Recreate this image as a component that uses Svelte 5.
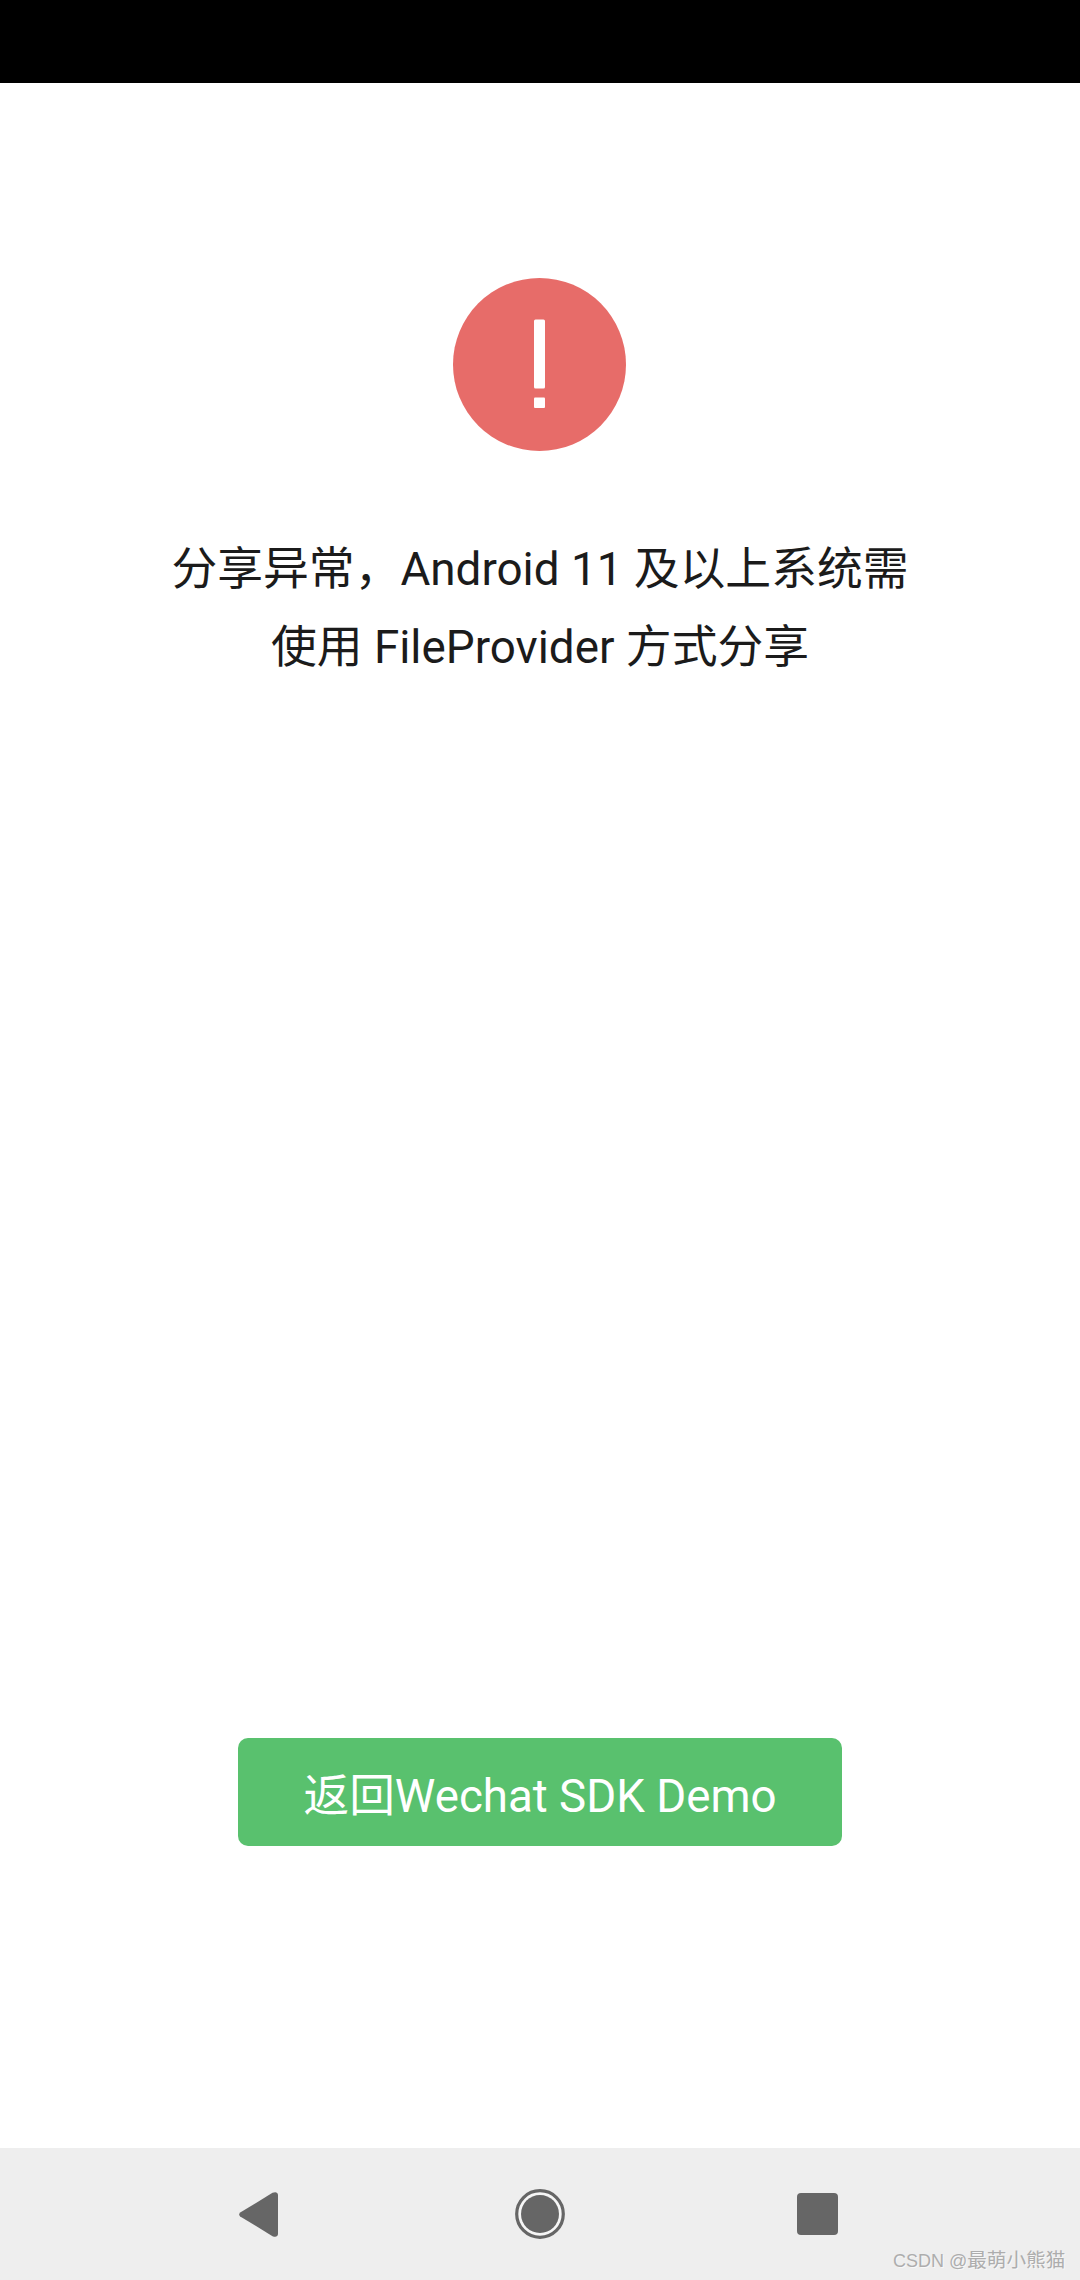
<script lang="ts">
    let message = ['分享异常，Android 11 及以上系统需', '使用 FileProvider 方式分享'];
</script>

<div class="page">
    <div class="status-bar"></div>

    <main>
        <div class="icon">
            <svg width="173" height="173" viewBox="0 0 173 173">
                <circle cx="86.5" cy="86.5" r="86.5" fill="#e76c69" />
                <rect x="81" y="41.5" width="11" height="69" rx="1.5" fill="#fff" />
                <rect x="81" y="119.5" width="11" height="10.5" rx="1" fill="#fff" />
            </svg>
        </div>

        <div class="message">
            {#each message as line}
                <p>{line}</p>
            {/each}
        </div>

        <button>返回Wechat SDK Demo</button>
    </main>

    <nav>
        <svg class="back" width="39" height="45" viewBox="0 0 39 45">
            <path d="M1.2 20.6 L33.5 0.8 Q38.5 -1 39 3 L39 42 Q38.5 46 33.5 44.2 L1.2 24.4 Q-0.8 22.5 1.2 20.6 Z" fill="#666" />
        </svg>
        <svg class="home" width="50" height="50" viewBox="0 0 50 50">
            <circle cx="25" cy="25" r="23.3" fill="#f6f6f6" stroke="#666" stroke-width="3.2" />
            <circle cx="25" cy="25" r="19" fill="#666" />
        </svg>
        <svg class="recent" width="41" height="42" viewBox="0 0 41 42">
            <rect width="41" height="42" rx="4" fill="#666" />
        </svg>
    </nav>

    <span class="watermark"><span class="latin">CSDN @</span>最萌小熊猫</span>
</div>

<style>
    :global(body) {
        margin: 0;
        background: #fff;
    }

    .page {
        position: relative;
        display: flex;
        flex-direction: column;
        width: 1080px;
        height: 2280px;
        overflow: hidden;
        font-family: Roboto, "Noto Sans CJK SC", sans-serif;
    }

    .status-bar {
        height: 83px;
        background: #000;
    }

    main {
        flex: 1;
        display: flex;
        flex-direction: column;
        align-items: center;
        padding-top: 195px;
    }

    .icon {
        height: 173px;
        margin-left: -1px;
    }

    svg {
        display: block;
    }

    .message {
        margin-top: 80px;
        color: #1b1b1b;
        font-size: 45.8px;
        line-height: 78px;
        text-align: center;
    }

    .message p {
        margin: 0;
        white-space: nowrap;
    }

    button {
        margin-top: 1051px;
        width: 604px;
        height: 108px;
        border: 0;
        border-radius: 10px;
        background: #59c16e;
        color: #fff;
        font-family: inherit;
        font-size: 45.7px;
        padding: 0;
    }

    nav {
        position: relative;
        height: 132px;
        background: #eee;
    }

    nav svg {
        position: absolute;
    }

    .back {
        left: 239px;
        top: 44px;
    }

    .home {
        left: 515px;
        top: 41px;
    }

    .recent {
        left: 797px;
        top: 45px;
    }

    .watermark {
        position: absolute;
        left: 893px;
        top: 2248px;
        color: #adadad;
        font-family: "Liberation Sans", "Noto Sans CJK SC", sans-serif;
        font-size: 19.6px;
        line-height: 24px;
        white-space: nowrap;
        text-shadow: 1px 1px 0 rgba(255, 255, 255, 0.6);
    }

    .latin {
        font-size: 18px;
    }
</style>
